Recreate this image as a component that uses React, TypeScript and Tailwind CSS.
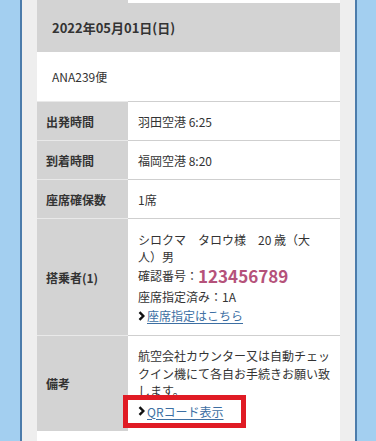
import React from 'react'

const jp = { fontFamily: '"Noto Sans CJK JP", "Noto Sans", sans-serif' }

const Chevron = () => (
  <svg width="7" height="10" viewBox="0 0 7 10" className="mr-[2px] shrink-0">
    <path d="M1.5 1.2 L5.3 5 L1.5 8.8" fill="none" stroke="#111" strokeWidth="2.4" />
  </svg>
)

const LinkLine = ({ label }: { label: string }) => (
  <div className="flex items-center h-[17px]">
    <Chevron />
    <a className="text-[#3d6fa3] underline underline-offset-2 decoration-1">{label}</a>
  </div>
)

const Row = ({ label, children, className = '' }: { label: string; children: React.ReactNode; className?: string }) => (
  <>
    <div className="bg-[#d3d3d3] border-t border-[#e9e9e9] flex items-center pl-[9px] font-bold text-[#333]">
      {label}
    </div>
    <div className={`bg-white border-t border-[#cfcfcf] pl-[10px] pr-[10px] ${className}`}>{children}</div>
  </>
)

const App = () => {
  return (
    <div className="w-[376px] h-[441px] bg-[#a3cff0] overflow-hidden pl-[20px]" style={jp}>
      <div className="w-[337px] h-full border-x-2 border-[#4c7cab] bg-[#eeeeee] px-[15px]">
        <div className="grid grid-cols-[91px_212px] text-[12px] text-[#333] leading-[17px]">
          {/* tail of the previous flight block */}
          <div className="h-[3px] bg-[#d3d3d3]" />
          <div className="h-[3px] bg-white" />

          <div className="col-span-2 h-[49px] bg-[#d3d3d3] flex items-center pl-[15px] font-bold text-[13px]">
            2022年05月01日(日)
          </div>
          <div className="col-span-2 h-[49px] bg-white flex items-center pl-[15px]">ANA239便</div>

          <Row label="出発時間" className="h-[39px] flex items-center">羽田空港 6:25</Row>
          <Row label="到着時間" className="h-[39px] flex items-center">福岡空港 8:20</Row>
          <Row label="座席確保数" className="h-[39px] flex items-center">1席</Row>

          <Row label="搭乗者(1)" className="h-[117px] pt-[12px]">
            <div>
              シロクマ　タロウ様　20 歳（大
              <br />
              人）男
            </div>
            <div className="h-[21px] flex items-center">
              確認番号：<span className="text-[17px] font-bold text-[#b5527a]">123456789</span>
            </div>
            <div className="h-[21px] flex items-center">座席指定済み：1A</div>
            <LinkLine label="座席指定はこちら" />
          </Row>

          <Row label="備考" className="h-[96px] pt-[11px] relative">
            <div className="leading-[17.5px]">航空会社カウンター又は自動チェックイン機にて各自お手続きお願い致します。</div>
            <div className="mt-[3px]">
              <LinkLine label="QRコード表示" />
            </div>
            <div className="absolute left-[-5px] top-[59px] w-[123px] h-[33px] border-[5px] border-[#e01b24]" />
          </Row>

          <div className="col-span-2 h-[20px] bg-white" />
        </div>
      </div>
    </div>
  )
}

export default App
